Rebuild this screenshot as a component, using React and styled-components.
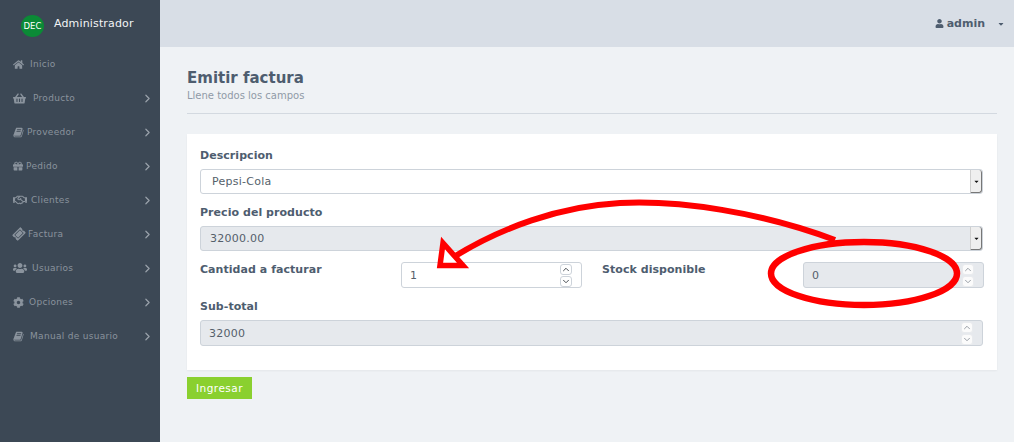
import React from 'react';
import styled, { createGlobalStyle } from 'styled-components';
import {
	FaHome,
	FaShoppingBasket,
	FaGift,
	FaRegHandshake,
	FaTicketAlt,
	FaUsers,
	FaCog,
	FaUser,
	FaCaretDown,
} from 'react-icons/fa';
import { FiChevronRight, FiChevronUp, FiChevronDown } from 'react-icons/fi';

const GlobalStyle = createGlobalStyle`
	html, body {
		margin: 0;
		padding: 0;
		height: 100%;
		overflow: hidden;
		background: #eff2f5;
		font-family: "DejaVu Sans", sans-serif;
	}
	* {
		box-sizing: border-box;
	}
`;

const Page = styled.div`
	position: relative;
	display: flex;
	width: 1014px;
	height: 442px;
	overflow: hidden;
`;

const Sidebar = styled.aside`
	width: 160px;
	flex-shrink: 0;
	background: #3c4855;
`;

const Brand = styled.div`
	display: flex;
	align-items: center;
	height: 47px;
	padding: 0 0 0 21px;
	gap: 10px;
	color: #f2f4f6;
	font-size: 11px;
	letter-spacing: 0.15px;
`;

const Logo = styled.div`
	width: 23px;
	height: 22px;
	margin-top: 5px;
	border-radius: 50%;
	background: #0b8a36;
	color: #fff;
	font-size: 8.5px;
	line-height: 22px;
	text-align: center;
	letter-spacing: 0;
`;

const BrandName = styled.span`
	margin-top: -1px;
`;

const NavItem = styled.div`
	display: flex;
	align-items: center;
	height: 34px;
	padding: 0 6px 0 13px;
	color: #8a939d;
	font-size: 9px;
	letter-spacing: 0.3px;
	gap: ${(p) => p.$gap}px;

	& > svg:first-child {
		width: ${(p) => p.$icon}px;
		height: ${(p) => p.$icon}px;
		flex-shrink: 0;
		transform: ${(p) => (p.$tilt ? 'rotate(-45deg)' : 'none')};
	}
`;

const NavChevron = styled(FiChevronRight)`
	margin-left: auto;
	margin-top: 1px;
	width: 13px;
	height: 13px;
	stroke-width: 2.2;
	color: #9aa2ab;
`;

const Main = styled.main`
	flex: 1;
	min-width: 0;
`;

const Topbar = styled.header`
	display: flex;
	align-items: center;
	justify-content: flex-end;
	height: 47px;
	padding: 0 9px 0 0;
	background: #d8dee6;
	color: #4e5d6f;
	font-size: 11px;
	font-weight: 700;
`;

const UserName = styled.span`
	display: flex;
	align-items: center;
	gap: 3px;
`;

const Caret = styled(FaCaretDown)`
	width: 8px;
	height: 8px;
	margin-left: 12px;
`;

const Content = styled.div`
	padding: 22px 17px 0 27px;
`;

const Title = styled.h1`
	margin: 0;
	color: #4e5d6f;
	font-size: 15px;
	line-height: 19px;
	font-weight: 700;
`;

const Subtitle = styled.p`
	margin: 1px 0 0;
	color: #8f9aa7;
	font-size: 10px;
	line-height: 14px;
`;

const Divider = styled.hr`
	margin: 10px 0 20px;
	border: 0;
	border-top: 1px solid #d3d9e0;
`;

const Card = styled.section`
	height: 236px;
	padding: 15px 14px 0 13px;
	background: #fff;
	box-shadow: 0 1px 2px rgba(0, 0, 0, 0.05);
`;

const Label = styled.label`
	display: block;
	color: #4e5d6f;
	font-size: 11px;
	line-height: 13px;
	font-weight: 700;
	letter-spacing: 0.05px;
	margin: ${(p) => p.$margin || '0 0 7px'};
`;

const Input = styled.div`
	display: flex;
	align-items: center;
	height: ${(p) => p.$height || 25}px;
	padding: 0 0 0 ${(p) => p.$pad || 9}px;
	border: 1px solid #cdd3da;
	border-radius: 3px;
	background: ${(p) => (p.$disabled ? '#e6e9ed' : '#fff')};
	color: #555f6b;
	font-size: 11px;
	letter-spacing: 0.25px;
`;

const InputText = styled.span`
	flex: 1;
`;

const SelectArrow = styled.div`
	display: flex;
	align-items: center;
	justify-content: center;
	align-self: stretch;
	width: 12px;
	background: #efefef;
	border-left: 1px solid #cfcfcf;
	border-bottom: 1px solid #777;
	border-right: 1px solid #777;
	border-radius: 0 3px 3px 0;
	color: #111;

	& svg {
		width: 7px;
		height: 7px;
	}
`;

const Spinner = styled.div`
	display: flex;
	flex-direction: column;
	gap: 1px;
	margin-right: 9px;
`;

const SpinButton = styled.div`
	display: flex;
	align-items: center;
	justify-content: center;
	width: 12px;
	height: 11px;
	border: 1px solid ${(p) => (p.$disabled ? '#e9ebee' : '#cdd3da')};
	border-radius: 3px;
	background: ${(p) => (p.$disabled ? '#fbfbfb' : '#fff')};
	color: ${(p) => (p.$disabled ? '#9aa0a7' : '#4a4f55')};

	& svg {
		width: 11px;
		height: 11px;
		stroke-width: 2.4;
	}
`;

const Row = styled.div`
	display: grid;
	grid-template-columns: 201px 181px 20px 201px 181px;
	margin-top: 11px;
`;

const RowLabel = styled(Label)`
	margin: 0;
	padding-top: 1px;
`;

const SubmitButton = styled.button`
	display: block;
	width: 65px;
	height: 22px;
	margin-top: 7px;
	padding: 0;
	border: 0;
	background: #8ad02f;
	color: #fff;
	font-family: inherit;
	font-size: 10.5px;
	letter-spacing: 0.5px;
`;

const Annotation = styled.svg`
	position: absolute;
	top: 0;
	left: 0;
	pointer-events: none;
`;

// the old slanted book glyph, react-icons only has the flat one
const BookIcon = () => (
	<svg viewBox="0 0 1664 1792" fill="currentColor">
		<path d="M1639 478q40 57 18 129l-275 906q-19 64-76.5 107.5t-122.5 43.5h-923q-77 0-148.5-53.5t-99.5-131.5q-24-67-2-127 0-4 3-27t4-37q1-8-3-21.5t-3-19.5q2-11 8-21t16.5-23.5 16.5-23.5q23-38 45-91.5t30-91.5q3-10 .5-30t-.5-28q3-11 17-28t17-23q21-36 42-92t25-90q1-9-2.5-32t.5-28q4-13 22-30.5t22-22.5q19-26 42.5-84.5t27.5-96.5q1-8-3-25.5t-2-26.5q2-8 9-18t18-23 17-21q8-12 16.5-30.5t15-35 16-36 19.5-32 26.5-23.5 36-11.5 47.5 5.5l-1 3q38-9 51-9h761q74 0 114 56t18 130l-274 906q-36 119-71.5 153.5t-128.5 34.5h-869q-27 0-38 15-11 16-1 43 24 70 144 70h923q29 0 56-15.5t35-41.5l300-987q7-22 5-57 38 15 59 43zm-1064 2q-4 13 2 22.5t20 9.5h608q13 0 25.5-9.5t16.5-22.5l21-64q4-13-2-22.5t-20-9.5h-608q-13 0-25.5 9.5t-16.5 22.5zm-83 256q-4 13 2 22.5t20 9.5h608q13 0 25.5-9.5t16.5-22.5l21-64q4-13-2-22.5t-20-9.5h-608q-13 0-25.5 9.5t-16.5 22.5z" />
	</svg>
);

const navItems = [
	{ icon: FaHome, text: 'Inicio', gap: 6, size: 11 },
	{ icon: FaShoppingBasket, text: 'Producto', gap: 7, size: 13, chevron: true },
	{ icon: BookIcon, text: 'Proveedor', gap: 3, size: 11, chevron: true },
	{ icon: FaGift, text: 'Pedido', gap: 3, size: 10, chevron: true },
	{ icon: FaRegHandshake, text: 'Clientes', gap: 4, size: 14, chevron: true },
	{ icon: FaTicketAlt, text: 'Factura', gap: 3, size: 12, tilt: true, chevron: true },
	{ icon: FaUsers, text: 'Usuarios', gap: 5, size: 14, chevron: true },
	{ icon: FaCog, text: 'Opciones', gap: 5, size: 11, chevron: true },
	{ icon: BookIcon, text: 'Manual de usuario', gap: 6, size: 11, chevron: true },
];

const SpinnerButtons = ({ disabled }) => (
	<Spinner>
		<SpinButton $disabled={disabled}>
			<FiChevronUp />
		</SpinButton>
		<SpinButton $disabled={disabled}>
			<FiChevronDown />
		</SpinButton>
	</Spinner>
);

const App = () => {
	return (
		<>
			<GlobalStyle />
			<Page>
				<Sidebar>
					<Brand>
						<Logo>DEC</Logo>
						<BrandName>Administrador</BrandName>
					</Brand>
					{navItems.map((item) => (
						<NavItem key={item.text} $gap={item.gap} $icon={item.size} $tilt={item.tilt}>
							<item.icon />
							<span>{item.text}</span>
							{item.chevron && <NavChevron />}
						</NavItem>
					))}
				</Sidebar>
				<Main>
					<Topbar>
						<UserName>
							<FaUser size={9} />
							admin
						</UserName>
						<Caret />
					</Topbar>
					<Content>
						<Title>Emitir factura</Title>
						<Subtitle>Llene todos los campos</Subtitle>
						<Divider />
						<Card>
							<Label>Descripcion</Label>
							<Input $pad={11}>
								<InputText>Pepsi-Cola</InputText>
								<SelectArrow>
									<FaCaretDown />
								</SelectArrow>
							</Input>
							<Label $margin="12px 0 7px">Precio del producto</Label>
							<Input $disabled>
								<InputText>32000.00</InputText>
								<SelectArrow>
									<FaCaretDown />
								</SelectArrow>
							</Input>
							<Row>
								<RowLabel>Cantidad a facturar</RowLabel>
								<Input $height={26} $pad={8}>
									<InputText>1</InputText>
									<SpinnerButtons />
								</Input>
								<span />
								<RowLabel>Stock disponible</RowLabel>
								<Input $height={26} $pad={8} $disabled>
									<InputText>0</InputText>
									<SpinnerButtons disabled />
								</Input>
							</Row>
							<Label $margin="12px 0 7px">Sub-total</Label>
							<Input $height={26} $pad={8} $disabled>
								<InputText>32000</InputText>
								<SpinnerButtons disabled />
							</Input>
						</Card>
						<SubmitButton>Ingresar</SubmitButton>
					</Content>
				</Main>
				<Annotation width="1014" height="442" viewBox="0 0 1014 442">
					<path
						d="M835 240 C 760 212, 680 200, 620 203 C 560 206, 500 228, 452 258"
						fill="none"
						stroke="#ff0000"
						strokeWidth="6"
					/>
					<path
						d="M443 243 L440 265.5 L463 265.5 Z"
						fill="#fff"
						stroke="#ff0000"
						strokeWidth="5.5"
					/>
					<ellipse
						cx="864"
						cy="273.5"
						rx="93"
						ry="31.5"
						fill="none"
						stroke="#ff0000"
						strokeWidth="6.5"
					/>
				</Annotation>
			</Page>
		</>
	);
};

export default App;
